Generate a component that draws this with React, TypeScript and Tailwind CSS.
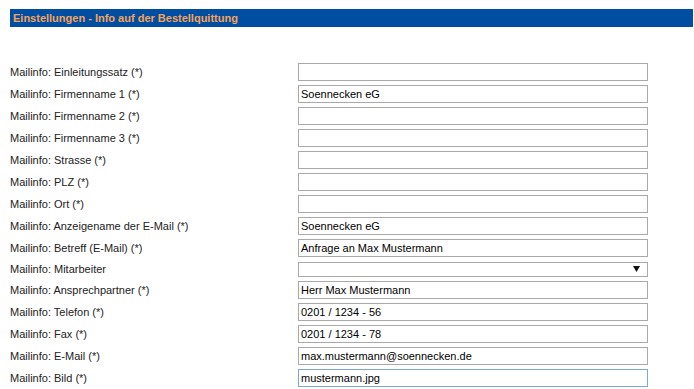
import React from "react";

const rows: { label: string; value?: string; select?: boolean; focus?: boolean }[] = [
  { label: "Mailinfo: Einleitungssatz (*)" },
  { label: "Mailinfo: Firmenname 1 (*)", value: "Soennecken eG" },
  { label: "Mailinfo: Firmenname 2 (*)" },
  { label: "Mailinfo: Firmenname 3 (*)" },
  { label: "Mailinfo: Strasse (*)" },
  { label: "Mailinfo: PLZ (*)" },
  { label: "Mailinfo: Ort (*)" },
  { label: "Mailinfo: Anzeigename der E-Mail (*)", value: "Soennecken eG" },
  { label: "Mailinfo: Betreff (E-Mail) (*)", value: "Anfrage an Max Mustermann" },
  { label: "Mailinfo: Mitarbeiter", select: true },
  { label: "Mailinfo: Ansprechpartner (*)", value: "Herr Max Mustermann" },
  { label: "Mailinfo: Telefon (*)", value: "0201 / 1234 - 56" },
  { label: "Mailinfo: Fax (*)", value: "0201 / 1234 - 78" },
  { label: "Mailinfo: E-Mail (*)", value: "max.mustermann@soennecken.de" },
  { label: "Mailinfo: Bild (*)", value: "mustermann.jpg", focus: true },
];

export default function App() {
  return (
    <div className="w-[694px] h-[389px] overflow-hidden bg-white font-['Liberation_Sans',Arial,sans-serif] pl-[10px] pt-[9px] pr-px">
      <div className="h-[18px] bg-[#004ea1] flex items-center pl-[3px]">
        <span className="text-[11px] font-bold text-[#f4a35a] leading-none">
          Einstellungen - Info auf der Bestellquittung
        </span>
      </div>
      <div className="mt-[36px] flex flex-col gap-[4px]">
        {rows.map((r) => (
          <div
            key={r.label}
            className={"flex items-center " + (r.select ? "h-[16px]" : "h-[18px]")}
          >
            <div className="w-[288px] text-[11px] text-[#222] leading-none">{r.label}</div>
            <div
              className={
                "w-[350px] border flex items-center pl-[2px] pr-[7px] text-[11px] text-black leading-none " +
                (r.select ? "h-[15px] " : "h-[18px] ") +
                (r.focus ? "border-[#7ea6da]" : "border-[#a9a9a9]")
              }
            >
              <span className="flex-1">{r.value ?? ""}</span>
              {r.select && (
                <svg width="7" height="6" viewBox="0 0 7 6" className="block">
                  <path d="M0 0 H7 L3.5 6 Z" fill="#111" />
                </svg>
              )}
            </div>
          </div>
        ))}
      </div>
    </div>
  );
}
